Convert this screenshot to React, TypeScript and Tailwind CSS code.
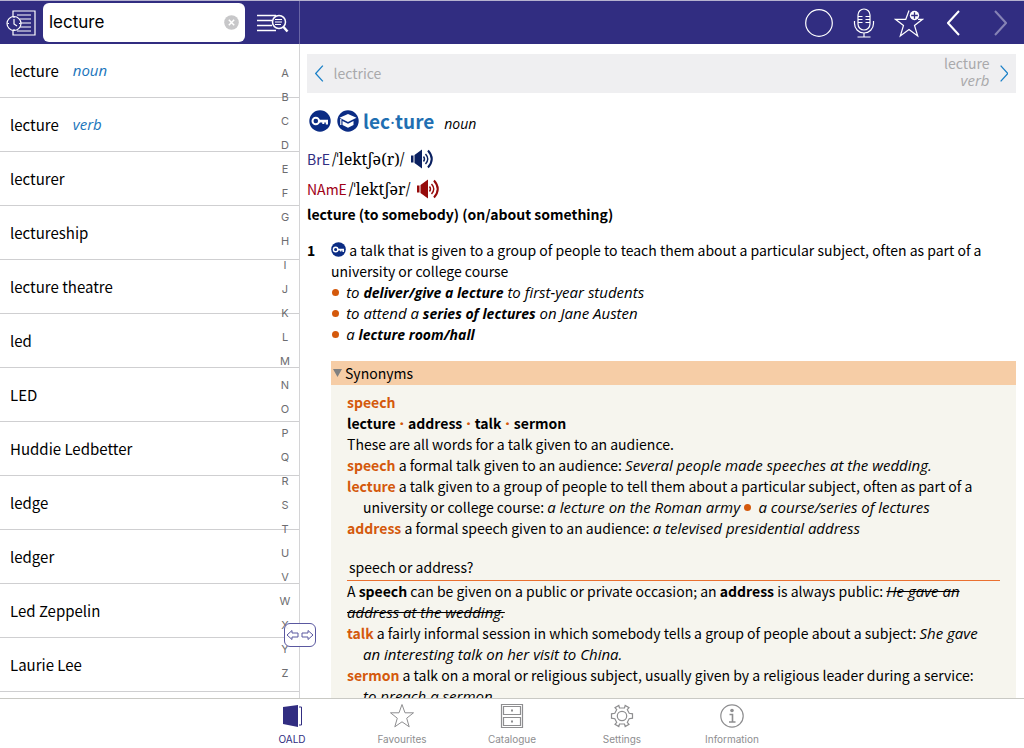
import type { ReactNode } from "react";

const words = [
  { word: "lecture", pos: "noun" },
  { word: "lecture", pos: "verb" },
  { word: "lecturer" },
  { word: "lectureship" },
  { word: "lecture theatre" },
  { word: "led" },
  { word: "LED" },
  { word: "Huddie Ledbetter" },
  { word: "ledge" },
  { word: "ledger" },
  { word: "Led Zeppelin" },
  { word: "Laurie Lee" },
];

const letters = "ABCDEFGHIJKLMNOPQRSTUVWXYZ".split("");

const HistoryIcon = () => (
  <svg width="30" height="28" viewBox="0 0 30 28" fill="none" stroke="#fff" strokeWidth="1.2">
    <path d="M7 8V2h22v24H7v-5" />
    <path d="M11 6h14M14 10h11M15 14h10M14 18h11M11 22h14" />
    <circle cx="8" cy="14.500" r="7" fill="#312d81" />
    <path d="M8 10v5l3 2M8 8v1M8 20v1M1.500 14.500h1.500M13 14.500h1.500" />
  </svg>
);

const TextSearchIcon = () => (
  <svg width="32" height="22" viewBox="0 0 32 22" fill="none" stroke="#fff">
    <path d="M0 3.500h19M0 8.500h15M0 13.500h15M0 18.500h19" strokeWidth="1.300" />
    <circle cx="22" cy="10" r="6.500" strokeWidth="1.500" />
    <path d="M18 7.500h7M18 10h7M18 12.500h6" strokeWidth="1.200" />
    <path d="M26.500 15l4 4.500" strokeWidth="2.500" />
  </svg>
);

const ClearIcon = () => (
  <svg width="15" height="15" viewBox="0 0 15 15">
    <circle cx="7.500" cy="7.500" r="7.300" fill="#c7c7c9" />
    <path d="M4.800 4.800l5.400 5.400M10.200 4.800l-5.400 5.400" stroke="#fff" strokeWidth="1.500" />
  </svg>
);

const CircleIcon = () => (
  <svg width="30" height="30" viewBox="0 0 30 30" fill="none" stroke="#fff" strokeWidth="1.200">
    <circle cx="15" cy="15" r="13.300" />
  </svg>
);

const MicIcon = () => (
  <svg width="22" height="30" viewBox="0 0 22 30" fill="none" stroke="#fff" strokeWidth="1.200">
    <rect x="5" y="1" width="12" height="21" rx="6" />
    <path d="M5 8.500h4.500M5 11.500h4.500M5 14.500h4.500M17 8.500h-4.500M17 11.500h-4.500M17 14.500h-4.500" />
    <path d="M1.500 13v2.500a9.500 9.500 0 0 0 19 0V13M11 25v4M4.500 29h13" />
  </svg>
);

const StarPlusIcon = () => (
  <svg width="30" height="30" viewBox="0 0 30 30" fill="none" stroke="#fff" strokeWidth="1.200">
    <path d="M15 2.500l-3.200 8.800H1.500l8 6.200L6.300 28l8.700-6.400 8.700 6.400-3.200-10.500 8-6.200H24" />
    <circle cx="20.500" cy="7.500" r="4.700" fill="#fff" stroke="none" />
    <path d="M20.500 4.200v6.600M17.200 7.500h6.600" stroke="#312d81" strokeWidth="1.300" />
  </svg>
);

const Chevron = ({ right, size, className, width }: { right?: boolean; size: number; className: string; width: number }) => (
  <svg width={size / 2} height={size} viewBox="0 0 13 26" fill="none" stroke="currentColor" strokeWidth={width} className={className}>
    <path d={right ? "M1 1l11 12L1 25" : "M12 1L1 13l11 12"} />
  </svg>
);

const KeyIcon = ({ size, className = "" }: { size: number; className?: string }) => (
  <svg width={size} height={size} viewBox="0 0 22 22" className={`inline-block shrink-0 ${className}`}>
    <circle cx="11" cy="11" r="10.700" fill="#0b2c84" />
    <circle cx="6.800" cy="11" r="3.300" fill="none" stroke="#fff" strokeWidth="2" />
    <path d="M9.500 9.800H19V14.500h-2.200v-2h-1.500v1.500h-2v-1.500H9.500z" fill="#fff" />
  </svg>
);

const AcademicIcon = () => (
  <svg width="22" height="22" viewBox="0 0 22 22" className="shrink-0">
    <circle cx="11" cy="11" r="10.700" fill="#0b2c84" />
    <path d="M11 4l8.500 3.800-8.500 4.200L2.500 7.800z" fill="#fff" />
    <path d="M5.500 11l5.500 2.700 5.500-2.700v4L11 17.800 5.500 15zM3.200 9h1.200v6H3.200z" fill="#fff" />
  </svg>
);

const SpeakerIcon = ({ className }: { className: string }) => (
  <svg width="23" height="20" viewBox="0 0 23 20" fill="none" stroke="currentColor" className={className}>
    <path d="M0 6.500h2.500v7H0zM3.500 6L11 .500v19L3.500 14z" fill="currentColor" stroke="none" />
    <path d="M12.500 7.500q2 2.500 0 5M14.500 5q4.500 5 0 10" strokeWidth="1.400" />
    <path d="M17 1.500q7.500 8.500 0 17" strokeWidth="2" />
  </svg>
);

const BookIcon = () => (
  <svg width="24" height="24" viewBox="0 0 24 24">
    <path d="M3 3l15-2v22L3 20z" fill="#312d81" />
    <path d="M19 3h2.500v18H19" fill="none" stroke="#312d81" />
  </svg>
);

const StarIcon = () => (
  <svg width="26" height="26" viewBox="0 0 26 26" fill="none" stroke="#8e8e90">
    <path d="M13 1.500l3 8.300h8.500l-6.800 5.400 2.500 8.600L13 18.800l-7.200 5 2.500-8.600L1.500 9.800H10z" />
  </svg>
);

const DrawersIcon = () => (
  <svg width="24" height="26" viewBox="0 0 24 26" fill="none" stroke="#8e8e90">
    <path d="M1.500 1.500h21v23h-21zM3.500 3.500h17v8h-17zM3.500 14.500h17v8h-17z" strokeWidth="1.200" />
    <path d="M11 7.500h2M11 18.500h2" strokeWidth="2" />
  </svg>
);

const GearIcon = () => (
  <svg width="24" height="24" viewBox="0 0 24 24" fill="none" stroke="#8e8e90" strokeWidth="1.200">
    <circle cx="12" cy="12" r="4.700" />
    <path d="M9.500 4L8.800 1.500 5 3.700l1.700 2-1.900 3.600L1.500 9.800v4.400l3.300.5 1.900 3.600-1.700 2 3.800 2.200.7-2.500h5l.7 2.500 3.800-2.200-1.700-2 1.900-3.600 3.300-.5V9.800l-3.300-.5-1.900-3.600 1.700-2-3.800-2.200-.7 2.500z" />
  </svg>
);

const InfoIcon = () => (
  <svg width="24" height="24" viewBox="0 0 24 24" fill="none" stroke="#8e8e90">
    <circle cx="12" cy="12" r="11.200" strokeWidth="1.200" />
    <circle cx="12" cy="6.500" r="1.800" fill="#8e8e90" stroke="none" />
    <path d="M9.500 10.500H12.500V18M9 18h6.500" strokeWidth="1.600" />
  </svg>
);

const ResizeIcon = () => (
  <svg width="28" height="12" viewBox="0 0 28 12" fill="none" stroke="#5a58a0">
    <path d="M1 6l5-4.500v2.500h6v4H6v2.500zM27 6l-5-4.500v2.500h-6v4h6v2.500z" />
  </svg>
);

const tabs = [
  { icon: <BookIcon />, title: "OALD", active: true },
  { icon: <StarIcon />, title: "Favourites" },
  { icon: <DrawersIcon />, title: "Catalogue" },
  { icon: <GearIcon />, title: "Settings" },
  { icon: <InfoIcon />, title: "Information" },
];

const Em = ({ children }: { children: ReactNode }) => (
  <em className="font-['Open_Sans','Noto_Sans',sans-serif] text-[15px] leading-none [&_b]:text-[14px]">{children}</em>
);

const Head = ({ children }: { children: ReactNode }) => <b className="text-[#d4590c]">{children}</b>;

const Dot = () => <span className="mr-1 ml-px inline-block size-[7px] rounded-full bg-[#d4590c] align-[2px]" />;

const MidDot = () => <b className="mx-px font-['Open_Sans',sans-serif] leading-none text-[#d4590c]">·</b>;

function Header() {
  return (
    <header className="flex h-11 shrink-0 border-t border-[#b5b2cf] bg-[#312d81]">
      <div className="flex w-[300px] shrink-0 items-center border-r border-[#6965a5] pl-1.5">
        <button aria-label="History"><HistoryIcon /></button>
        <div className="ml-[7px] flex h-[39px] min-w-0 flex-1 items-center rounded-md bg-white px-1.5">
          <input
            aria-label="Search"
            defaultValue="lecture"
            className="min-w-0 flex-1 font-['Inter',sans-serif] text-[17px] outline-none"
          />
          <button aria-label="Clear"><ClearIcon /></button>
        </div>
        <button aria-label="Full text search" className="mr-2.5 ml-3"><TextSearchIcon /></button>
      </div>
      <div className="flex flex-1 items-center justify-end pr-[17px]">
        <button aria-label="Record" className="mr-[19px]"><CircleIcon /></button>
        <button aria-label="Speak" className="mr-[19px]"><MicIcon /></button>
        <button aria-label="Add favourite" className="mr-[23px]"><StarPlusIcon /></button>
        <button aria-label="Back" className="mr-[34px]"><Chevron size={26} width={2} className="text-white" /></button>
        <button aria-label="Forward"><Chevron right size={26} width={2} className="text-[#8683b5]" /></button>
      </div>
    </header>
  );
}

function Sidebar() {
  return (
    <aside className="relative w-[300px] shrink-0 border-r border-[#d4d4d6]">
      <ul className="h-full overflow-hidden">
        {words.map((item, i) => (
          <li key={i} className="h-[54px] border-b border-[#cfcfd1]">
            <a href="#" className="flex h-full items-center gap-3.5 pl-2.5 text-[15px]">
              {item.word}
              {item.pos && <em className="font-['Open_Sans',sans-serif] text-[15px] text-[#1a75bb]">{item.pos}</em>}
            </a>
          </li>
        ))}
      </ul>
      <nav className="absolute top-[17px] right-[7px] flex w-3.5 flex-col text-center font-['Inter',sans-serif] text-[11px] leading-6 text-[#6d6d70]">
        {letters.map(letter => (
          <a href="#" key={letter}>{letter}</a>
        ))}
      </nav>
      <button aria-label="Resize panels" className="absolute -right-[17px] bottom-[51px] z-10 flex h-6 w-8 items-center justify-center rounded-md border border-[#5a58a0] bg-white/90">
        <ResizeIcon />
      </button>
    </aside>
  );
}

function Entry() {
  return (
    <main className="min-w-0 flex-1 overflow-hidden pt-2.5 pr-2 pl-[7px]">
      <nav className="flex h-[39px] items-center justify-between bg-[#efeff1] px-2 text-[14px] leading-[17px] text-[#a9a9ab]">
        <a href="#" className="flex items-center gap-2.5">
          <Chevron size={17} width={2} className="text-[#1a80c8]" />
          lectrice
        </a>
        <a href="#" className="flex items-center gap-2.5 text-right">
          <span className="pb-1">
            lecture
            <br />
            <em className="font-['Open_Sans',sans-serif] text-[15px] leading-none">verb</em>
          </span>
          <Chevron right size={17} width={2} className="text-[#1a80c8]" />
        </a>
      </nav>

      <div className="mt-4 flex h-6 items-center pl-0.5">
        <KeyIcon size={22} />
        <span className="w-1.5" />
        <AcademicIcon />
        <div className="ml-1 flex items-baseline gap-2.5 pt-0.5">
          <h1 className="text-[19px] font-bold text-[#1f6fb2]">
            lec<span className="font-['Open_Sans',sans-serif] leading-none font-normal">·</span>ture
          </h1>
          <em className="font-['Open_Sans',sans-serif] text-[14px]">noun</em>
        </div>
      </div>
      <div className="mt-[11px] flex h-[30px] items-center">
        <span className="text-[14px] text-[#312d81]">BrE</span>
        <span className="ml-0.5 font-['Noto_Serif','Liberation_Serif',serif] text-[16px]">/ˈlektʃə(r)/</span>
        <button aria-label="Play British pronunciation" className="ml-[7px]"><SpeakerIcon className="text-[#0a2060]" /></button>
      </div>
      <div className="flex h-[30px] items-center">
        <span className="text-[14px] text-[#a00016]">NAmE</span>
        <span className="ml-0.5 font-['Noto_Serif','Liberation_Serif',serif] text-[16px]">/ˈlektʃər/</span>
        <button aria-label="Play American pronunciation" className="ml-[7px]"><SpeakerIcon className="text-[#960a0a]" /></button>
      </div>
      <p className="font-bold">lecture (to somebody) (on/about something)</p>

      <div className="mt-[15px] flex">
        <b className="w-6 shrink-0">1</b>
        <div className="min-w-0 flex-1">
          <p><KeyIcon size={15} className="align-[-1px]" /> a talk that is given to a group of people to teach them about a particular subject, often as part of a university or college course</p>
          <ul>
            <li><Dot /> <Em>to <b>deliver/give a lecture</b> to first-year students</Em></li>
            <li><Dot /> <Em>to attend a <b>series of lectures</b> on Jane Austen</Em></li>
            <li><Dot /> <Em>a <b>lecture room/hall</b></Em></li>
          </ul>
          <section className="mt-4 bg-[#f6f5ee]">
            <button className="flex h-6 w-full items-center gap-[3px] bg-[#f6cda6] pl-0.5">
              <svg width="9" height="8" viewBox="0 0 9 8"><path d="M0 0h9L4.500 8z" fill="#808080" /></svg>
              Synonyms
            </button>
            <div className="px-4 pt-[7px]">
              <p><Head>speech</Head></p>
              <p className="font-bold">lecture <MidDot /> address <MidDot /> talk <MidDot /> sermon</p>
              <p>These are all words for a talk given to an audience.</p>
              <p><Head>speech</Head> a formal talk given to an audience: <Em>Several people made speeches at the wedding.</Em></p>
              <p className="pl-4 -indent-4"><Head>lecture</Head> a talk given to a group of people to tell them about a particular subject, often as part of a university or college course: <Em>a lecture on the Roman army</Em> <Dot /> <Em>a course/series of lectures</Em></p>
              <p><Head>address</Head> a formal speech given to an audience: <Em>a televised presidential address</Em></p>
              <h2 className="mt-[18px] border-b border-[#ea7030] pb-0.5 pl-0.5">speech or address?</h2>
              <div className="pr-4">
                <p>A <b>speech</b> can be given on a public or private occasion; an <b>address</b> is always public: <Em><s>He gave an address at the wedding.</s></Em></p>
                <p className="pl-4 -indent-4"><Head>talk</Head> a fairly informal session in which somebody tells a group of people about a subject: <Em>She gave an interesting talk on her visit to China.</Em></p>
                <p className="pl-4 -indent-4"><Head>sermon</Head> a talk on a moral or religious subject, usually given by a religious leader during a service: <Em>to preach a sermon</Em></p>
              </div>
            </div>
          </section>
        </div>
      </div>
    </main>
  );
}

export default function App() {
  return (
    <div className="flex h-screen flex-col bg-white font-['Noto_Sans_CJK_SC',sans-serif] text-[14px] leading-[21px] text-black">
      <Header />
      <div className="flex min-h-0 flex-1">
        <Sidebar />
        <Entry />
      </div>
      <nav className="flex h-[50px] shrink-0 justify-center border-t border-[#c9c9c4] font-['Inter',sans-serif] text-[10px] leading-4 text-[#8e8e90]">
        {tabs.map(tab => (
          <a href="#" key={tab.title} className="flex w-[110px] flex-col items-center gap-px pt-[3px]">
            <span className="flex h-7 items-center">{tab.icon}</span>
            <span className={tab.active ? "text-[#312d81]" : ""}>{tab.title}</span>
          </a>
        ))}
      </nav>
    </div>
  );
}
